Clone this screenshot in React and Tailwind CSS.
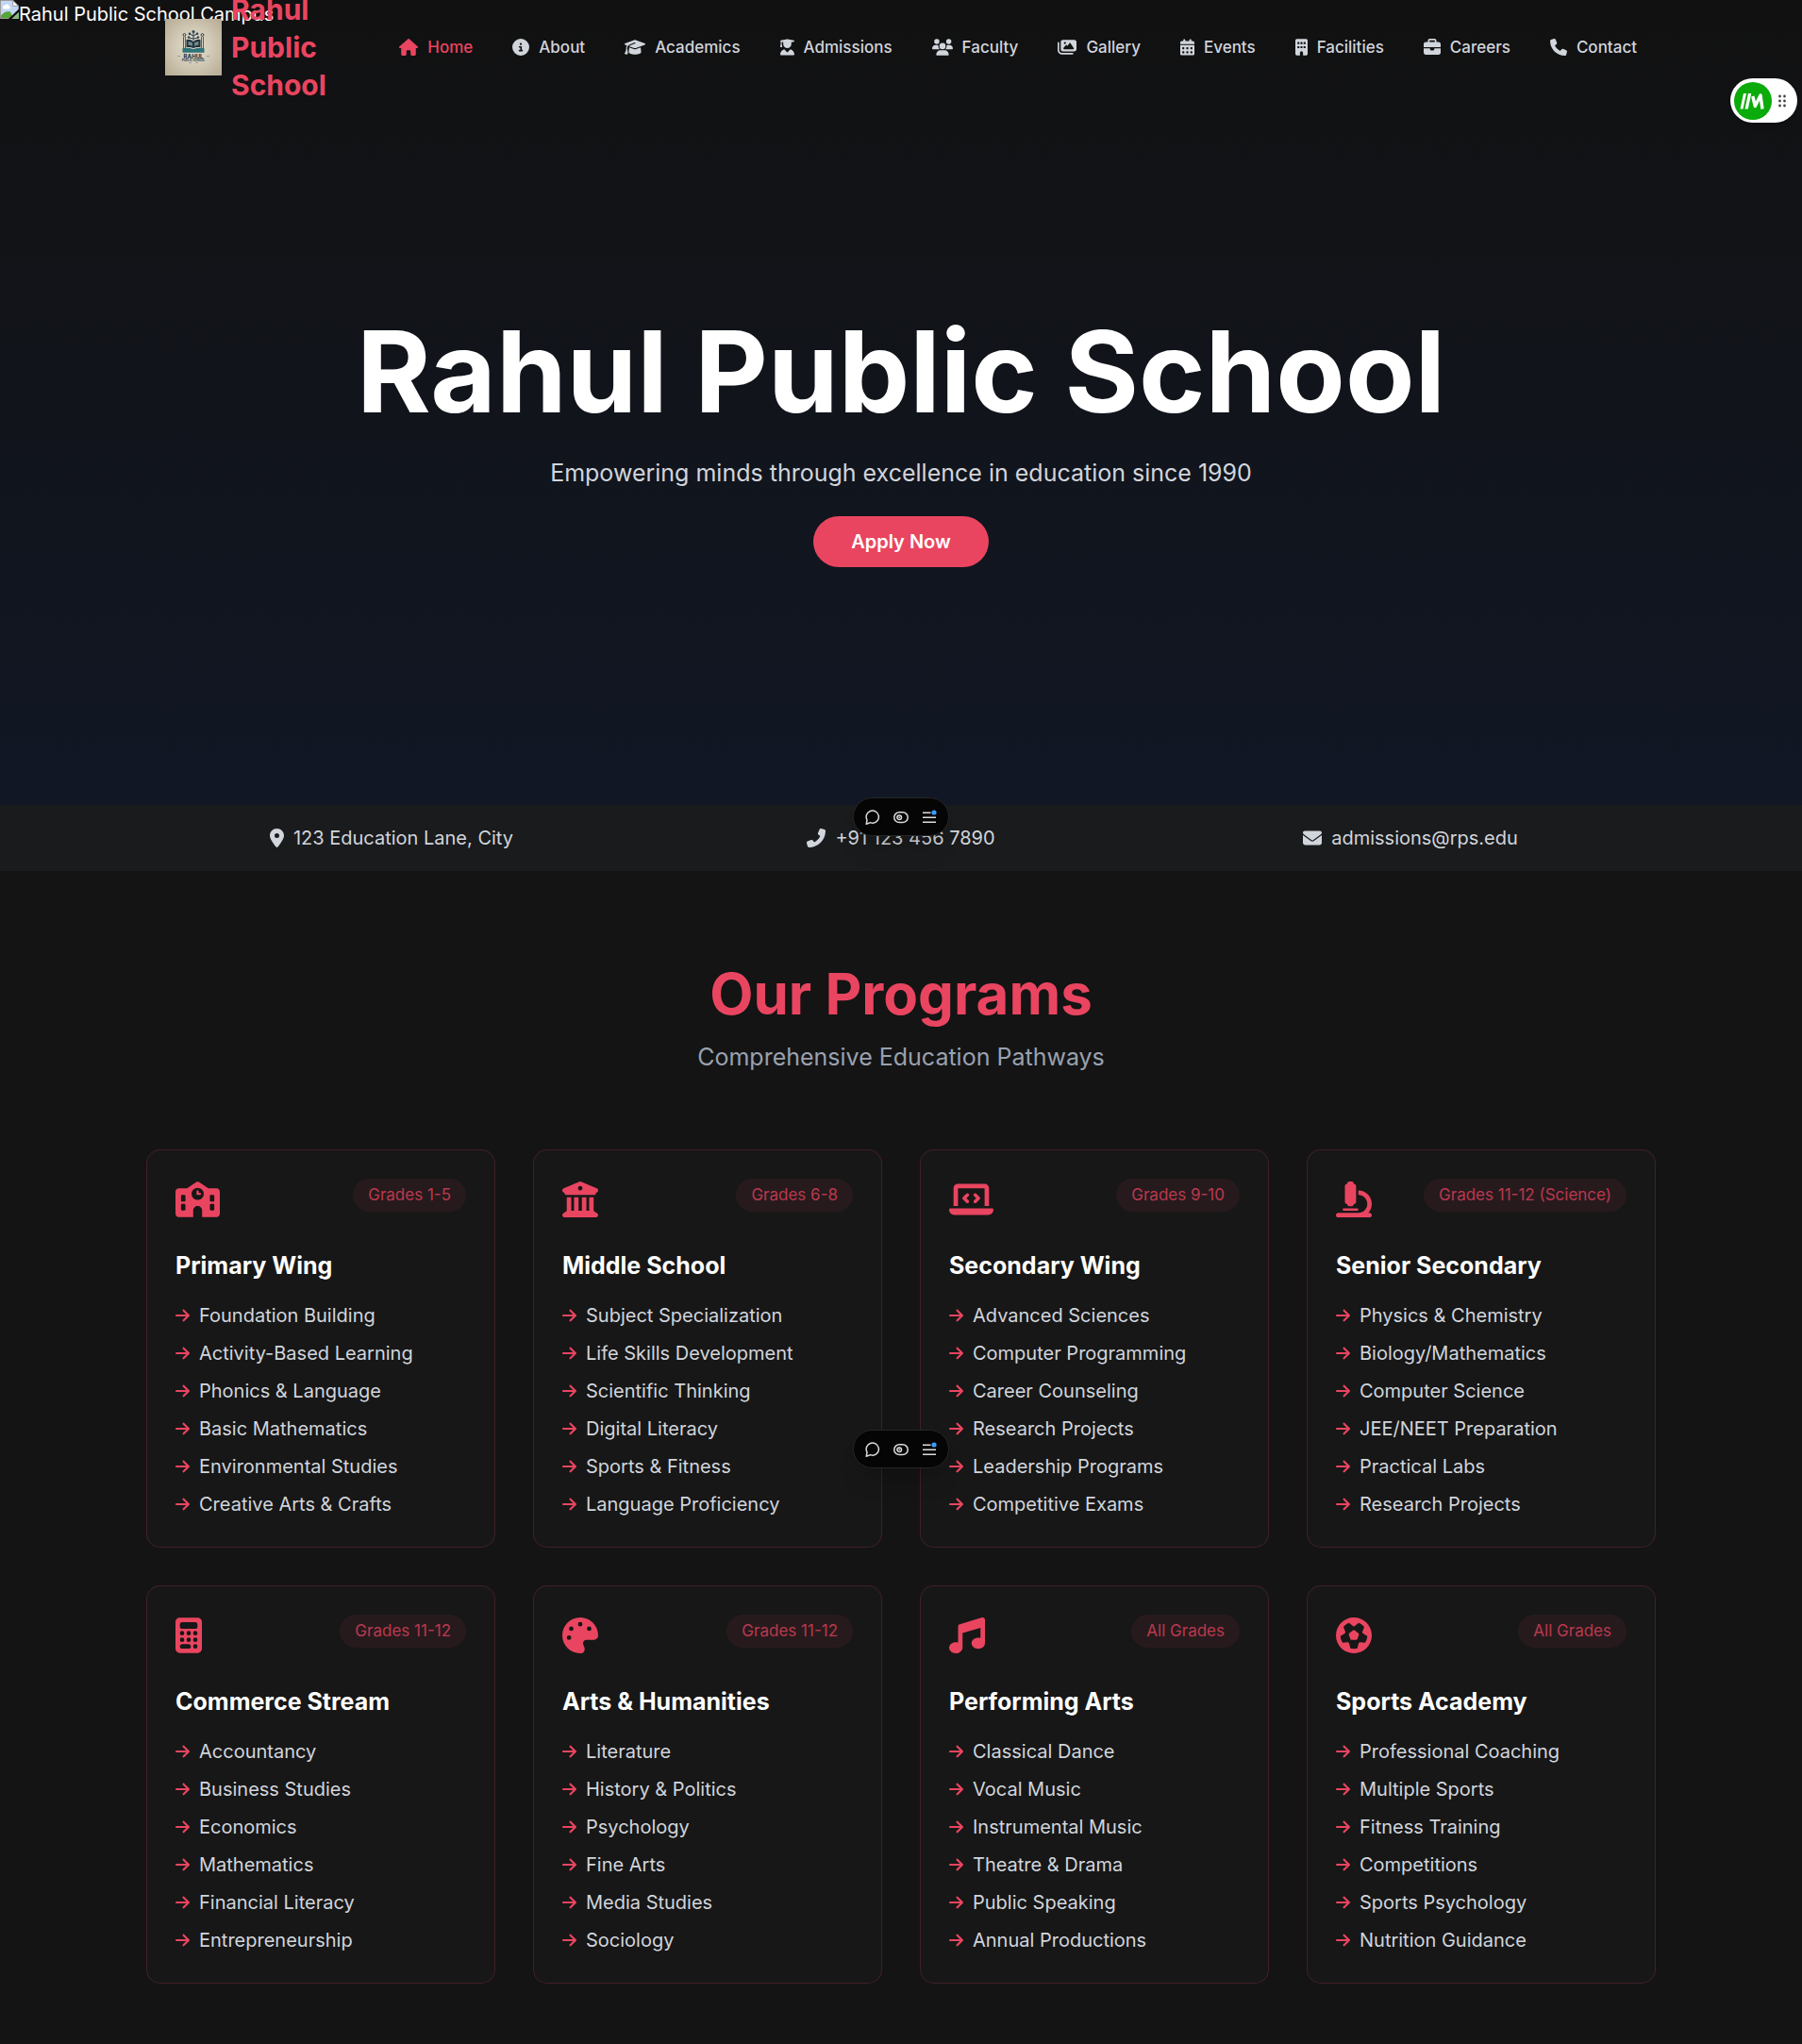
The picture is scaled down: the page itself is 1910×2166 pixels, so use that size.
import {
  FaHouse, FaCircleInfo, FaGraduationCap, FaUserGraduate, FaUsers, FaImages, FaCalendarDays,
  FaBuilding, FaBriefcase, FaPhone, FaLocationDot, FaPhoneFlip, FaEnvelope, FaSchool,
  FaBuildingColumns, FaLaptopCode, FaMicroscope, FaCalculator, FaPalette, FaMusic, FaFutbol,
  FaArrowRight,
} from "react-icons/fa6";

const NAV = [
  ["Home", FaHouse, "w-5"],
  ["About", FaCircleInfo, "w-[18px]"],
  ["Academics", FaGraduationCap, "w-[22px]"],
  ["Admissions", FaUserGraduate, "w-[15px]"],
  ["Faculty", FaUsers, "w-[22px]"],
  ["Gallery", FaImages, "w-5"],
  ["Events", FaCalendarDays, "w-[15px]"],
  ["Facilities", FaBuilding, "w-[13px]"],
  ["Careers", FaBriefcase, "w-[18px]"],
  ["Contact", FaPhone, "w-[18px]"],
];

const CONTACTS = [
  ["123 Education Lane, City", FaLocationDot, "w-[15px]"],
  ["+91 123 456 7890", FaPhoneFlip, "w-5"],
  ["admissions@rps.edu", FaEnvelope, "w-5"],
];

const PROGRAMS = [
  { title: "Primary Wing", grade: "Grades 1-5", Icon: FaSchool, iconWidth: "w-[47px]", items: ["Foundation Building", "Activity-Based Learning", "Phonics & Language", "Basic Mathematics", "Environmental Studies", "Creative Arts & Crafts"] },
  { title: "Middle School", grade: "Grades 6-8", Icon: FaBuildingColumns, iconWidth: "w-[38px]", items: ["Subject Specialization", "Life Skills Development", "Scientific Thinking", "Digital Literacy", "Sports & Fitness", "Language Proficiency"] },
  { title: "Secondary Wing", grade: "Grades 9-10", Icon: FaLaptopCode, iconWidth: "w-[47px]", items: ["Advanced Sciences", "Computer Programming", "Career Counseling", "Research Projects", "Leadership Programs", "Competitive Exams"] },
  { title: "Senior Secondary", grade: "Grades 11-12 (Science)", Icon: FaMicroscope, iconWidth: "w-[38px]", items: ["Physics & Chemistry", "Biology/Mathematics", "Computer Science", "JEE/NEET Preparation", "Practical Labs", "Research Projects"] },
  { title: "Commerce Stream", grade: "Grades 11-12", Icon: FaCalculator, iconWidth: "w-[28px]", items: ["Accountancy", "Business Studies", "Economics", "Mathematics", "Financial Literacy", "Entrepreneurship"] },
  { title: "Arts & Humanities", grade: "Grades 11-12", Icon: FaPalette, iconWidth: "w-[38px]", items: ["Literature", "History & Politics", "Psychology", "Fine Arts", "Media Studies", "Sociology"] },
  { title: "Performing Arts", grade: "All Grades", Icon: FaMusic, iconWidth: "w-[38px]", items: ["Classical Dance", "Vocal Music", "Instrumental Music", "Theatre & Drama", "Public Speaking", "Annual Productions"] },
  { title: "Sports Academy", grade: "All Grades", Icon: FaFutbol, iconWidth: "w-[38px]", items: ["Professional Coaching", "Multiple Sports", "Fitness Training", "Competitions", "Sports Psychology", "Nutrition Guidance"] },
];

function BrokenImage() {
  return (
    <svg viewBox="0 0 20 20" className="size-5 shrink-0" aria-hidden="true">
      <path d="M.5.5h13.2l5.800 5.800v13.200H.5z" fill="#c3d6f5" stroke="#9a9a9a" />
      <path d="M13.700.5v5.800h5.800z" fill="#fff" stroke="#9a9a9a" />
      <path d="M3 7.200a1.800 1.800 0 0 1 2.400-1.700 2.500 2.500 0 0 1 4.500 1 1.600 1.600 0 0 1-.5 3H4.800A2 2 0 0 1 3 7.200z" fill="#fff" />
      <path d="M1 19v-2.500C4 12.500 7.500 11.500 11 12.500L14 19z" fill="#55a636" />
      <path d="M20 9.500 9 20h3.500L20 13z" fill="#111" />
      <path d="M20 13v7h-7.500z" fill="#8fb97c" />
    </svg>
  );
}

function Logo() {
  return (
    <svg viewBox="0 0 60 60" className="size-[60px] shrink-0" role="img" aria-label="Rahul Public School crest">
      <defs>
        <radialGradient id="paper" cx=".5" cy=".5" r=".7">
          <stop offset="0" stopColor="#e6e0cf" />
          <stop offset=".5" stopColor="#d0c8b4" />
          <stop offset="1" stopColor="#b5aa92" />
        </radialGradient>
      </defs>
      <rect width="60" height="60" fill="url(#paper)" />
      <g fill="none" stroke="#2b4350" strokeWidth="1">
        <path d="M30 13v10M30 18l-4-2M30 18l4-2M30 21l-5-1M30 21l5-1" />
        <circle cx="20.500" cy="17" r="1.400" />
        <circle cx="39.500" cy="17" r="1.400" />
        <path d="M19.500 19v12M21.500 19v12M38.500 19v12M40.500 19v12" strokeWidth=".8" />
      </g>
      <g fill="#2b4350">
        <circle cx="30" cy="13.500" r="1.500" />
        <circle cx="26" cy="15.800" r="1.300" />
        <circle cx="34" cy="15.800" r="1.300" />
        <circle cx="25" cy="19.500" r="1.200" />
        <circle cx="35" cy="19.500" r="1.200" />
      </g>
      <path d="M22.500 22q4.500-.8 7.500 2 3-2.800 7.500-2v8q-4.500-.5-7.500 1-3-1.500-7.500-1z" fill="#1f3440" />
      <path d="M24.500 24q3 .2 4.500 1.500v3.500q-2-1.200-4.500-1.200zM35.500 24q-3 .2-4.500 1.500v3.500q2-1.200 4.500-1.200z" fill="#77898a" />
      <path d="M18.500 31q6-.8 11.500 1 5.500-1.800 11.500-1v4.800h-23z" fill="#2f7377" />
      <text x="30" y="41.500" textAnchor="middle" fontFamily="Inter, sans-serif" fontWeight="800" fontSize="6" fill="#25404b">RAHUL</text>
      <text x="30" y="44.700" textAnchor="middle" fontFamily="Inter, sans-serif" fontWeight="700" fontSize="3" fill="#25404b">PUBLIC SCHOOL</text>
      <path d="M13 39.500h3M44 39.500h3M25 46.500h3M32 46.500h3" stroke="#6f8286" strokeWidth=".6" />
    </svg>
  );
}

function DevToolbar({ className }) {
  return (
    <div className={`absolute left-1/2 flex h-[41px] w-[102px] -translate-x-1/2 items-center justify-center gap-3.5 rounded-full border border-[#262626] bg-[#050505] text-[#dcdcdc] shadow-xl ${className}`}>
      <button type="button" aria-label="Comments">
        <svg viewBox="0 0 16 16" className="size-4" fill="none" stroke="currentColor" strokeWidth="1.500">
          <path d="M1.300 15.200 2 10.800A6.600 6.600 0 1 1 8.300 14.200c-1 0-1.900-.2-2.700-.6z" strokeLinejoin="round" />
        </svg>
      </button>
      <button type="button" aria-label="Preview">
        <svg viewBox="0 0 16 16" className="size-4" fill="none" stroke="currentColor" strokeWidth="1.500">
          <rect x=".8" y="2.800" width="14.400" height="10.800" rx="5.400" />
          <circle cx="6.200" cy="8.200" r="2.300" />
          <path d="M6.200 7.500v1.400" />
        </svg>
      </button>
      <button type="button" aria-label="Menu">
        <svg viewBox="0 0 16 16" className="size-4" fill="none" stroke="currentColor" strokeWidth="1.500">
          <path d="M1 3.200h8.500M1 8.200h14M1 13.200h14" />
          <circle cx="13" cy="3" r="2.600" fill="#3b9cff" stroke="none" />
        </svg>
      </button>
    </div>
  );
}

function SideWidget() {
  return (
    <button type="button" aria-label="Open assistant" className="absolute top-[83px] right-[5px] flex h-[47px] w-[71px] items-center gap-[7px] rounded-full bg-white pl-1 shadow-md">
      <svg viewBox="0 0 40 40" className="size-10" aria-hidden="true">
        <circle cx="20" cy="20" r="20" fill="#0aab0a" />
        <path d="M6.500 28.500 10 12h3L9.500 28.500zM11.500 28.500 15 12h3.300l-3.500 16.500z" fill="#fff" />
        <path d="M19.800 15 22.300 25.500 28 14 30 28.500" fill="none" stroke="#fff" strokeWidth="3.400" strokeLinejoin="round" />
      </svg>
      <svg viewBox="0 0 8 14" className="h-3.5 w-2" fill="#444" aria-hidden="true">
        <circle cx="1.500" cy="2" r="1.400" /><circle cx="6.500" cy="2" r="1.400" />
        <circle cx="1.500" cy="7" r="1.400" /><circle cx="6.500" cy="7" r="1.400" />
        <circle cx="1.500" cy="12" r="1.400" /><circle cx="6.500" cy="12" r="1.400" />
      </svg>
    </button>
  );
}

function ProgramCard({ title, grade, Icon, iconWidth, items }) {
  return (
    <article className="rounded-[15px] border border-[#e94560]/20 bg-[#171717] p-[30px]">
      <div className="mb-[31px] flex h-11 items-start justify-between">
        <div className="flex h-11 items-center">
          <Icon className={`h-[38px] text-[#e94560] ${iconWidth}`} />
        </div>
        <span className="rounded-full bg-[#e94560]/8 px-4 py-1 text-[17px] leading-[27px] text-[#e94560]/75">{grade}</span>
      </div>
      <h3 className="mb-5 text-[25px] leading-[35px] font-bold text-white">{title}</h3>
      <ul className="flex flex-col gap-2.5">
        {items.map((item) => (
          <li key={item} className="flex items-center gap-2.5 text-[20px] leading-[30px] text-gray-300">
            <FaArrowRight className="h-[18px] w-[15px] shrink-0 text-[#e94560]" />
            {item}
          </li>
        ))}
      </ul>
    </article>
  );
}

export default function App() {
  return (
    <div className="relative min-h-screen bg-[#141414] font-[Inter,sans-serif] text-white">
      <div className="absolute top-0 left-0 flex items-start text-[20px] leading-[30px]">
        <BrokenImage />
        <span>Rahul Public School Campus</span>
      </div>
      <header className="absolute inset-x-0 top-0">
        <div className="mx-auto flex h-[100px] max-w-[1600px] items-center justify-between px-5">
          <a href="#" className="flex w-[180px] items-center gap-2.5 text-[30px] leading-10 font-bold text-[#e94560]">
            <Logo />
            <span>Rahul Public School</span>
          </a>
          <nav className="flex items-center gap-[42px]">
            {NAV.map(([label, Icon, width], i) => (
              <a key={label} href={`#${label.toLowerCase()}`} className={`flex items-center gap-2.5 text-[17px] leading-[26px] font-medium ${i === 0 ? "text-[#e94560]" : "text-gray-300"}`}>
                <Icon className={`h-[18px] shrink-0 ${width}`} />
                {label}
              </a>
            ))}
          </nav>
        </div>
      </header>
      <section className="flex min-h-[853px] flex-col items-center justify-center bg-linear-to-b from-[#111111] to-[#111725] pt-[82px] text-center">
        <h1 className="mb-[30px] text-[120px] leading-[120px] font-bold">Rahul Public School</h1>
        <p className="mb-[28px] text-[25px] leading-[35px] text-gray-300">Empowering minds through excellence in education since 1990</p>
        <a href="#apply" className="rounded-full bg-[#e94560] px-10 py-3 text-[20px] leading-[30px] font-semibold">Apply Now</a>
      </section>
      <div className="bg-[#1a1b1c] py-5">
        <div className="mx-auto grid max-w-[1600px] grid-cols-3 gap-5">
          {CONTACTS.map(([label, Icon, width]) => (
            <div key={label} className="flex items-center justify-center gap-2.5 text-[20px] leading-[30px] text-gray-300">
              <Icon className={`h-5 shrink-0 ${width}`} />
              {label}
            </div>
          ))}
        </div>
      </div>
      <main className="mx-auto max-w-[1600px] pt-[100px] pb-[60px]">
        <h2 className="mb-5 text-center text-[60px] leading-[60px] font-bold text-[#e94560]">Our Programs</h2>
        <p className="mb-20 text-center text-[25px] leading-[35px] text-gray-400">Comprehensive Education Pathways</p>
        <div className="grid grid-cols-4 gap-10">
          {PROGRAMS.map((program) => (
            <ProgramCard key={program.title} {...program} />
          ))}
        </div>
      </main>
      <DevToolbar className="top-[845px]" />
      <DevToolbar className="top-[1515px]" />
      <SideWidget />
    </div>
  );
}
